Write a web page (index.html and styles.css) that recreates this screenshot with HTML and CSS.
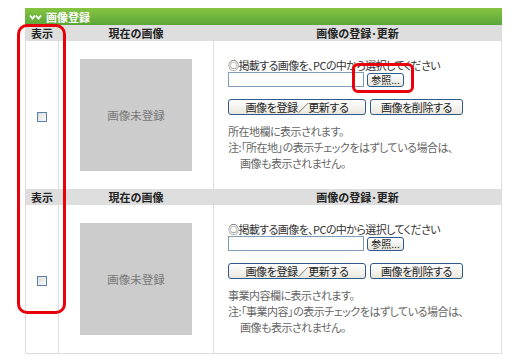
FILE: index.html
```html
<!DOCTYPE html>
<html lang="ja">
<head>
	<meta charset="utf-8">
	<title>画像登録</title>
	<link rel="stylesheet" href="styles.css">
</head>
<body>
<div class="panel">
	<div class="title">
		<svg class="chev" width="13" height="8" viewBox="0 0 13 8">
			<path d="M1 2.5 L3.5 5.5 L6 2.5 M7 2.5 L9.5 5.5 L12 2.5" fill="none" stroke="#fff" stroke-width="1.8"/>
		</svg>
		画像登録
	</div>
	<table class="grid">
		<tr class="head">
			<th class="c1">表示</th>
			<th class="c2">現在の画像</th>
			<th class="c3">画像の登録･更新</th>
		</tr>
		<tr class="body">
			<td class="c1"><span class="check"></span></td>
			<td class="c2"><div class="noimg">画像未登録</div></td>
			<td class="c3">
				<p class="lead">◎掲載する画像を、PCの中から選択してください</p>
				<div class="file"><span class="field"></span><button class="browse">参照...</button></div>
				<div class="actions"><button class="btn wide">画像を登録／更新する</button><button class="btn">画像を削除する</button></div>
				<p class="note">所在地欄に表示されます。<br>注:「所在地」の表示チェックをはずしている場合は、<br><span class="indent">画像も表示されません。</span></p>
			</td>
		</tr>
		<tr class="head">
			<th class="c1">表示</th>
			<th class="c2">現在の画像</th>
			<th class="c3">画像の登録･更新</th>
		</tr>
		<tr class="body">
			<td class="c1"><span class="check"></span></td>
			<td class="c2"><div class="noimg">画像未登録</div></td>
			<td class="c3">
				<p class="lead">◎掲載する画像を、PCの中から選択してください</p>
				<div class="file"><span class="field"></span><button class="browse">参照...</button></div>
				<div class="actions"><button class="btn wide">画像を登録／更新する</button><button class="btn">画像を削除する</button></div>
				<p class="note">事業内容欄に表示されます。<br>注:「事業内容」の表示チェックをはずしている場合は、<br><span class="indent">画像も表示されません。</span></p>
			</td>
		</tr>
	</table>
	<div class="mark mark-col"></div>
	<div class="mark mark-browse"></div>
</div>
</body>
</html>
```
FILE: styles.css
```css
body {
	margin: 0;
	font-family: "Noto Sans CJK JP", "DejaVu Sans", sans-serif;
	font-size: 11px;
	font-feature-settings: "palt";
	color: #333;
	background: #fff;
}

.panel {
	position: relative;
	width: 477px;
	margin: 8px 0 0 25px;
}

.title {
	display: flex;
	align-items: center;
	gap: 4px;
	height: 17px;
	padding-left: 4px;
	background: linear-gradient(#86c440, #5ba63a);
	color: #fff;
	font-weight: bold;
	font-size: 11px;
}

.grid {
	width: 477px;
	border-collapse: collapse;
	table-layout: fixed;
}

.grid th,
.grid td {
	border: 1px solid #ddd;
	padding: 0;
}

.head th {
	height: 14px;
	background: #dedede;
	font-size: 11px;
	font-weight: bold;
	color: #222;
	line-height: 14px;
	font-feature-settings: normal;
}

.body td {
	height: 148px;
	vertical-align: middle;
	text-align: center;
}

.c1 { width: 32px; }
.c2 { width: 154px; }

.body td.c3 {
	text-align: left;
	padding-left: 14px;
}

.check {
	display: inline-block;
	width: 8px;
	height: 8px;
	border: 1px solid #5a7fad;
	background: linear-gradient(135deg, #dcdcdc, #fafafa);
	vertical-align: middle;
}

.noimg {
	display: flex;
	align-items: center;
	justify-content: center;
	width: 112px;
	height: 112px;
	margin: 0 auto;
	background: #ccc;
	color: #777;
	font-size: 11.5px;
	font-feature-settings: normal;
}

.lead {
	margin: 0;
	line-height: 13px;
	letter-spacing: -0.6px;
}

.file {
	display: flex;
	align-items: center;
	gap: 3px;
}

.field {
	width: 134px;
	height: 13px;
	border: 1px solid #7f9db9;
	background: #fff;
}

button {
	font-family: inherit;
	font-feature-settings: "palt";
	color: #222;
	padding: 0;
	cursor: pointer;
}

.browse {
	width: 37px;
	height: 14px;
	font-size: 10px;
	line-height: 12px;
	border: 1px solid #2e5a8c;
	border-radius: 3px;
	background: linear-gradient(#fff, #e6e4da);
}

.actions {
	display: flex;
	gap: 4px;
	margin-top: 12px;
}

.btn {
	width: 93px;
	height: 16px;
	font-size: 11px;
	line-height: 14px;
	letter-spacing: -0.4px;
	border: 1px solid #2e5a8c;
	border-radius: 3px;
	background: linear-gradient(#fff, #e9e7dd);
}

.btn.wide { width: 138px; }

.note {
	margin: 8px 0 0;
	line-height: 16px;
	color: #666;
	letter-spacing: -0.5px;
}

.indent { padding-left: 12px; }

.mark {
	position: absolute;
	border: 3px solid #e8000a;
}

.mark-col {
	left: -8px;
	top: 16px;
	width: 43px;
	height: 284px;
	border-radius: 10px;
}

.mark-browse {
	left: 327px;
	top: 55px;
	width: 56px;
	height: 24px;
	border-radius: 6px;
}
```
